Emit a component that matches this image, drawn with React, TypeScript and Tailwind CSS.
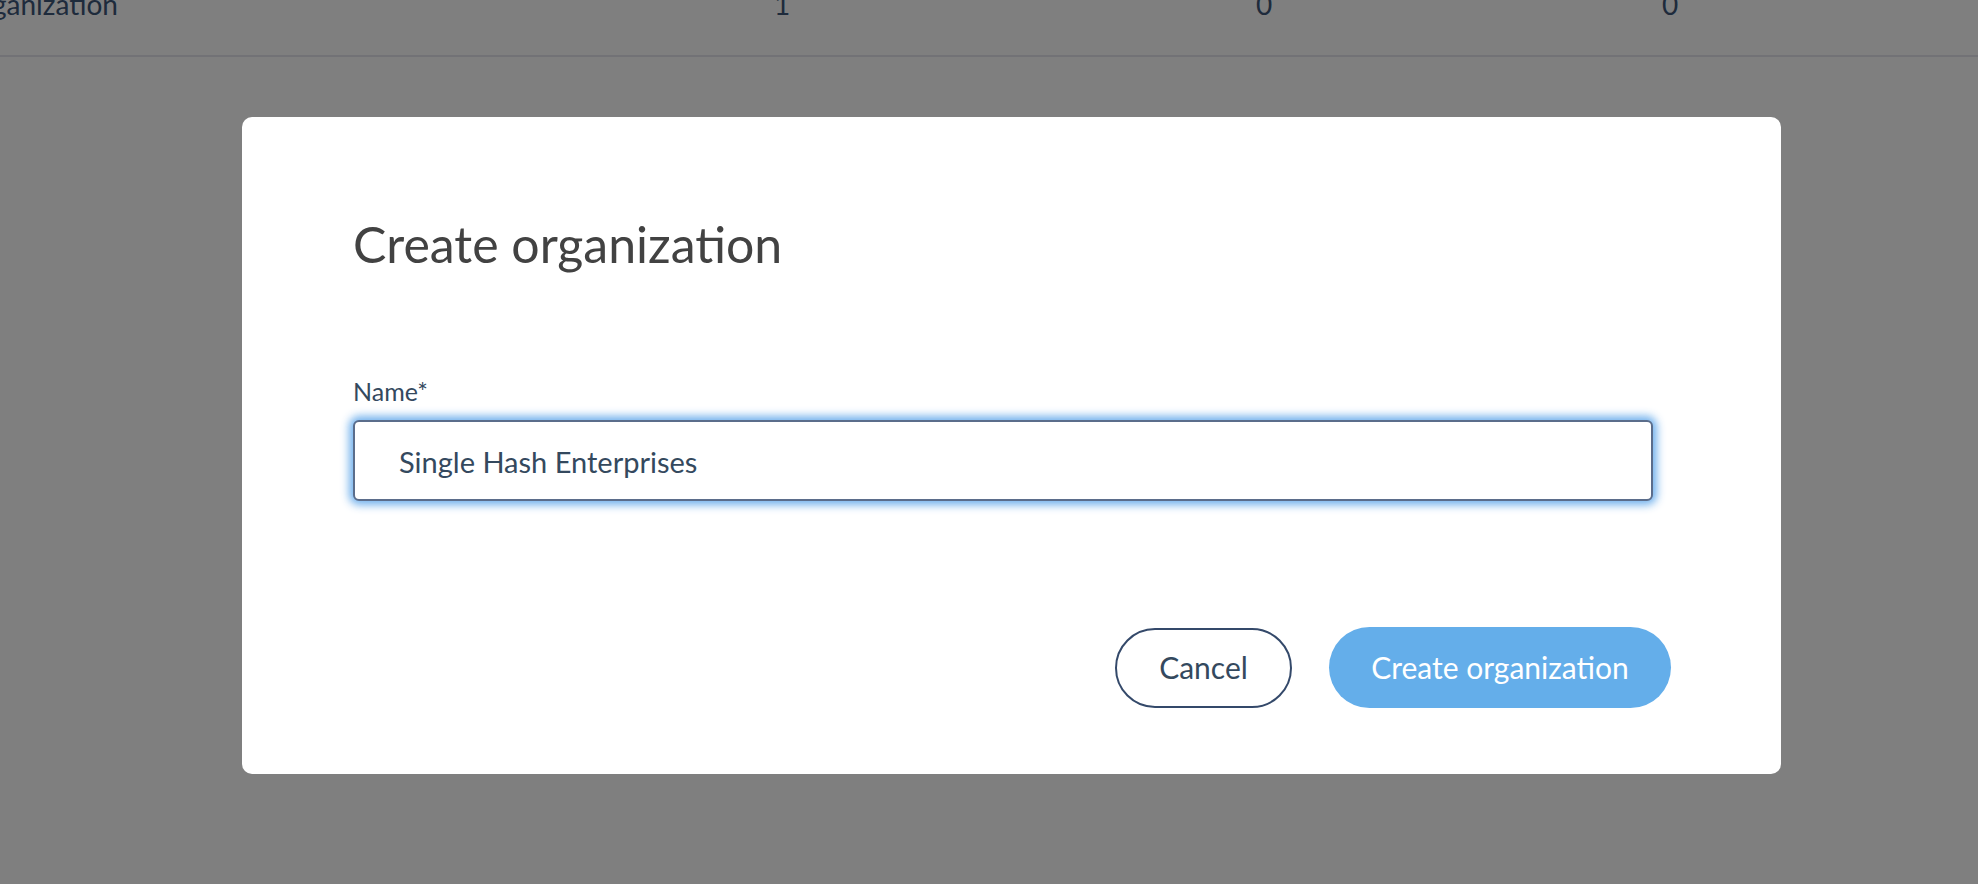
import { useState } from "react";

export default function App() {
  const [name, setName] = useState("Single Hash Enterprises");

  return (
    <div className="relative h-[884px] overflow-hidden bg-white font-['Lato',sans-serif]">
      {/* Page behind the dialog (scrolled, only the last table row shows) */}
      <div className="h-[57px] border-b-2 border-[#e4e4ec] overflow-hidden">
        <div className="flex -mt-[13px] text-[28px] leading-[34px] text-[#3c5678]">
          <div className="-ml-[40px] w-[722px] shrink-0">Organization</div>
          <div className="w-[200px] shrink-0 text-center">1</div>
          <div className="ml-[282px] w-[200px] shrink-0 text-center">0</div>
          <div className="ml-[206px] w-[200px] shrink-0 text-center">0</div>
        </div>
      </div>

      {/* Modal overlay */}
      <div className="fixed inset-0 bg-black/50 flex items-center justify-center pl-[45px] pt-[7px]">
        <div className="w-[1539px] h-[657px] bg-white rounded-[10px] pl-[111px] pr-[110px] pt-[97px] pb-[66px] flex flex-col">
          <h2 className="text-[50px] leading-[60px] font-normal text-[#424242]">Create organization</h2>

          <label htmlFor="org-name" className="mt-[102px] text-[25px] leading-[30px] text-[#34495e]">
            Name*
          </label>
          <input
            id="org-name"
            value={name}
            onChange={(e) => setName(e.target.value)}
            className="mt-[14px] w-[1300px] h-[81px] shrink-0 rounded-[6px] border-2 border-[#5b6d8b] bg-white pl-[44px] pt-[2px] text-[29px] text-[#34495e] outline-none shadow-[0_0_8px_4px_rgba(100,170,235,0.9)]"
          />

          <div className="mt-auto flex items-center justify-end gap-[37px]">
            <button className="h-[80px] w-[177px] rounded-full border-2 border-[#34496a] bg-white text-[30px] text-[#34495e]">
              Cancel
            </button>
            <button className="h-[81px] w-[342px] rounded-full bg-[#64aeea] text-[30px] text-white">
              Create organization
            </button>
          </div>
        </div>
      </div>
    </div>
  );
}
